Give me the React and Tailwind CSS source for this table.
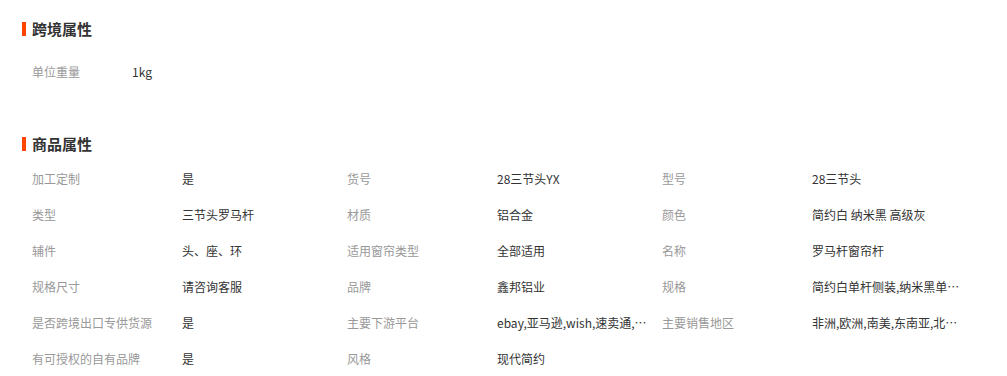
const font = { fontFamily: '"Noto Sans CJK SC", "Liberation Sans", sans-serif' };

const crossBorder = [{ label: '单位重量', value: '1kg' }];

const attrs = [
  { label: '加工定制', value: '是' },
  { label: '货号', value: '28三节头YX' },
  { label: '型号', value: '28三节头' },
  { label: '类型', value: '三节头罗马杆' },
  { label: '材质', value: '铝合金' },
  { label: '颜色', value: '简约白 纳米黑 高级灰' },
  { label: '辅件', value: '头、座、环' },
  { label: '适用窗帘类型', value: '全部适用' },
  { label: '名称', value: '罗马杆窗帘杆' },
  { label: '规格尺寸', value: '请咨询客服' },
  { label: '品牌', value: '鑫邦铝业' },
  { label: '规格', value: '简约白单杆侧装,纳米黑单杆侧装,高级灰单杆侧装' },
  { label: '是否跨境出口专供货源', value: '是' },
  { label: '主要下游平台', value: 'ebay,亚马逊,wish,速卖通,独立站,LAZADA' },
  { label: '主要销售地区', value: '非洲,欧洲,南美,东南亚,北美,东北亚,中东' },
  { label: '有可授权的自有品牌', value: '是' },
  { label: '风格', value: '现代简约' },
];

function Heading({ title, className }) {
  return (
    <div className={`flex items-center h-[20px] ${className}`}>
      <span className="w-[4px] h-[14px] bg-[#ff4400] mr-[6px]" />
      <span className="text-[15px] font-bold text-[#333]">{title}</span>
    </div>
  );
}

function Attr({ label, value }) {
  return (
    <div className="flex items-center h-[36px] w-[315px] text-[12px]">
      <span className="w-[150px] shrink-0 text-[#999]">{label}</span>
      <span className="w-[150px] truncate text-[#333]">{value}</span>
    </div>
  );
}

export default function App() {
  return (
    <div className="bg-white w-[1007px] h-[376px] overflow-hidden pl-[22px]" style={font}>
      <Heading title="跨境属性" className="mt-[19px]" />
      <div className="mt-[15px] pl-[10px] flex flex-col">
        {crossBorder.map((a) => (
          <div key={a.label} className="flex items-center h-[36px] text-[12px]">
            <span className="w-[100px] shrink-0 text-[#999]">{a.label}</span>
            <span className="text-[#333]">{a.value}</span>
          </div>
        ))}
      </div>

      <Heading title="商品属性" className="mt-[44px]" />
      <div className="mt-[7px] pl-[10px] grid grid-cols-[315px_315px_315px]">
        {attrs.map((a) => (
          <Attr key={a.label} label={a.label} value={a.value} />
        ))}
      </div>
    </div>
  );
}
